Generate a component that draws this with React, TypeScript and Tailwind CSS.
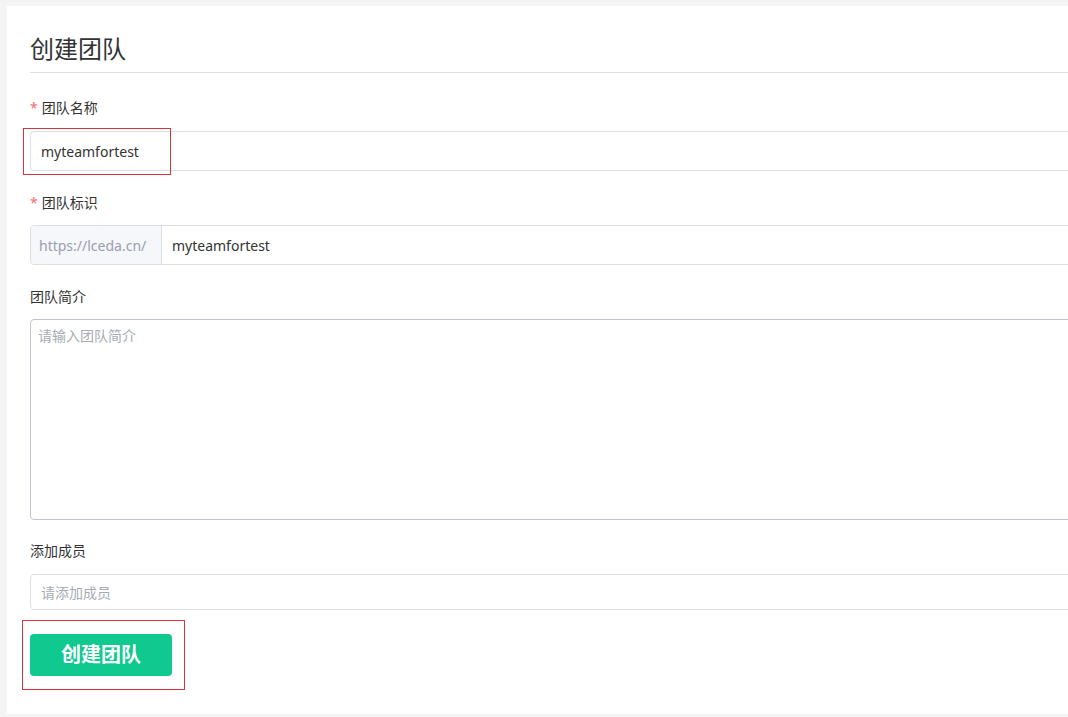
import React from "react";

const font = { fontFamily: '"Noto Sans", "Noto Sans CJK SC", sans-serif' };

function Label({ text, required }: { text: string; required?: boolean }) {
  return (
    <div className="flex h-5 items-center text-[14px] leading-5 text-[#333]">
      {required && <span className="mr-[4px] text-[#f56c6c]">*</span>}
      {text}
    </div>
  );
}

export default function App() {
  return (
    <div
      className="min-h-screen w-full overflow-hidden bg-[#f4f4f5] pl-[7px] pt-[6px]"
      style={font}
    >
      <div className="w-[1300px] bg-white pb-[38px] pl-[23px] pt-[27px]">
        <div className="border-b border-[#dcdfe6] pb-[7px]">
          <h1 className="text-[24px] leading-8 font-normal text-[#333]">
            创建团队
          </h1>
        </div>

        <div className="mt-[25px]">
          <Label text="团队名称" required />
          <div className="relative mt-[13px]">
            <div className="flex h-10 items-center rounded-[4px] border border-[#dcdfe6] px-[10px] text-[14px] text-[#333]">
              myteamfortest
            </div>
            <div className="absolute -left-[7px] -top-[3px] h-[47px] w-[148px] border border-[#d3373c]" />
          </div>
        </div>

        <div className="mt-[22px]">
          <Label text="团队标识" required />
          <div className="mt-[12px] flex h-10 rounded-[4px] border border-[#dcdfe6] text-[14px]">
            <div className="flex w-[131px] items-center rounded-l-[4px] border-r border-[#dcdfe6] bg-[#f5f7fa] px-[8px] text-[#9a9eb0]">
              https://lceda.cn/
            </div>
            <div className="flex items-center px-[10px] text-[#333]">
              myteamfortest
            </div>
          </div>
        </div>

        <div className="mt-[22px]">
          <Label text="团队简介" />
          <div className="mt-[12px] h-[201px] rounded-[4px] border border-[#c0c4cc] px-[7px] pt-[6px] text-[14px] leading-5 text-[#a8abb2]">
            请输入团队简介
          </div>
        </div>

        <div className="mt-[21px]">
          <Label text="添加成员" />
          <div className="mt-[13px] flex h-9 items-center rounded-[4px] border border-[#dcdfe6] px-[10px] text-[14px] text-[#a8abb2]">
            请添加成员
          </div>
        </div>

        <div className="relative mt-[24px] w-[142px]">
          <button className="flex h-[42px] w-[142px] items-center justify-center rounded-[4px] bg-[#0fc98f] text-[20px] font-bold text-white">
            创建团队
          </button>
          <div className="absolute -left-[8px] -top-[14px] h-[70px] w-[163px] border border-[#d3373c]" />
        </div>
      </div>
    </div>
  );
}
